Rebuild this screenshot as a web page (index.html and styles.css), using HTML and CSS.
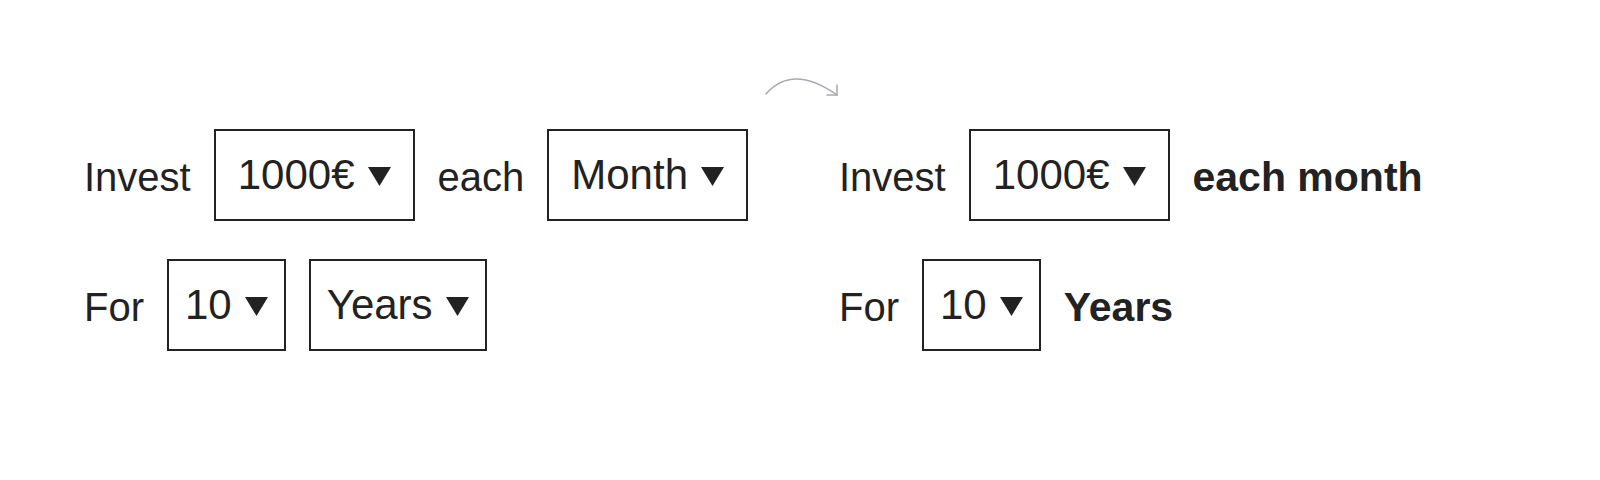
FILE: index.html
```html
<!DOCTYPE html>
<html lang="en">
<head>
  <meta charset="UTF-8">
  <title>Invest</title>
  <link rel="stylesheet" href="styles.css">
</head>
<body>
  <div class="page">

    <div class="panel">
      <div class="row">
        <span class="label">Invest</span>
        <div class="select">
          <span>1000€</span>
          <svg class="caret" viewBox="0 0 23 19"><path d="M0 0H23L11.5 19Z"/></svg>
        </div>
        <span class="label">each</span>
        <div class="select">
          <span>Month</span>
          <svg class="caret" viewBox="0 0 23 19"><path d="M0 0H23L11.5 19Z"/></svg>
        </div>
      </div>
      <div class="row">
        <span class="label">For</span>
        <div class="select compact">
          <span>10</span>
          <svg class="caret" viewBox="0 0 23 19"><path d="M0 0H23L11.5 19Z"/></svg>
        </div>
        <div class="select compact">
          <span>Years</span>
          <svg class="caret" viewBox="0 0 23 19"><path d="M0 0H23L11.5 19Z"/></svg>
        </div>
      </div>
    </div>

    <!-- 左から右への矢印 -->
    <svg class="arrow" viewBox="0 0 74 18">
      <path d="M1 15Q27.5 -15.5 72 16"/>
      <path d="M72 6V16H62"/>
    </svg>

    <div class="panel">
      <div class="row">
        <span class="label">Invest</span>
        <div class="select">
          <span>1000€</span>
          <svg class="caret" viewBox="0 0 23 19"><path d="M0 0H23L11.5 19Z"/></svg>
        </div>
        <span class="label strong">each month</span>
      </div>
      <div class="row">
        <span class="label">For</span>
        <div class="select compact">
          <span>10</span>
          <svg class="caret" viewBox="0 0 23 19"><path d="M0 0H23L11.5 19Z"/></svg>
        </div>
        <span class="label strong">Years</span>
      </div>
    </div>

  </div>
</body>
</html>
```

FILE: styles.css
```css
body {
  margin: 0;
  background-color: white;
  color: #222;
  font-family: "Liberation Sans", Arial, sans-serif;
}
.page {
  display: grid;
  grid-template-columns: 681px 74px auto;
  padding: 79px 0 0 84px;
}
.panel {
  display: flex;
  flex-direction: column;
  gap: 38px;
  padding-top: 50px;
}
.row {
  display: flex;
  align-items: center;
  gap: 23px;
}
.label {
  font-size: 40px;
  margin-top: 4px;
  white-space: nowrap;
}
.label.strong {
  font-size: 41px;
  font-weight: bold;
}
.select {
  display: flex;
  align-items: center;
  gap: 13px;
  height: 92px;
  box-sizing: border-box;
  padding: 0 22px;
  border: 2px solid #222;
  font-size: 42px;
  white-space: nowrap;
}
.select.compact {
  padding: 0 16px;
}
.caret {
  width: 23px;
  height: 19px;
  margin-top: 3px;
  fill: #222;
}
.arrow {
  width: 74px;
  height: 18px;
  overflow: visible;
  fill: none;
  stroke: #aaa8b1;
  stroke-width: 1.5;
  stroke-linecap: round;
}
```
